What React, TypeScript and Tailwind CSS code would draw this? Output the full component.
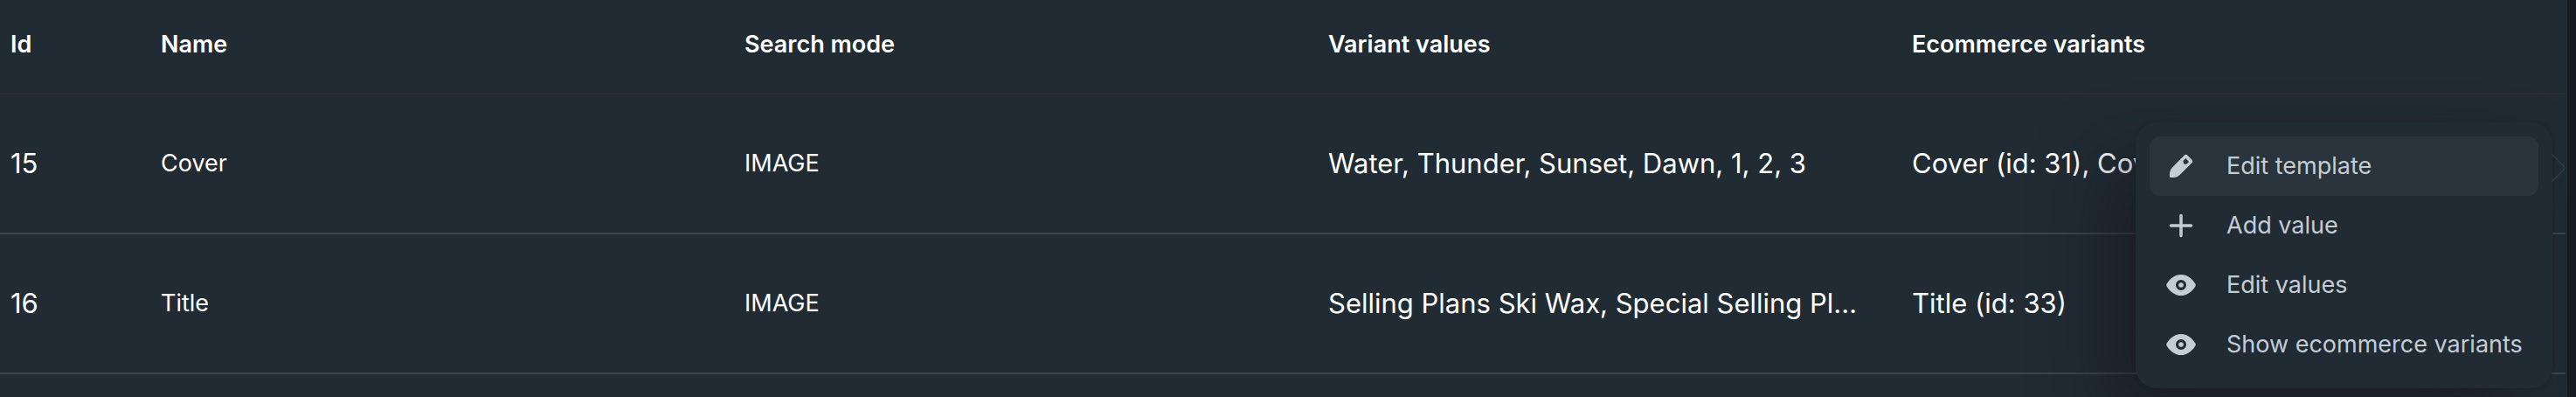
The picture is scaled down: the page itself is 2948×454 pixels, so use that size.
import React, { useState } from 'react';

interface TemplateRow {
  id: number;
  name: string;
  searchMode: string;
  values: string;
  variants: string;
}

const rows: TemplateRow[] = [
  {
    id: 15,
    name: 'Cover',
    searchMode: 'IMAGE',
    values: 'Water, Thunder, Sunset, Dawn, 1, 2, 3',
    variants: 'Cover (id: 31), Cov'
  },
  {
    id: 16,
    name: 'Title',
    searchMode: 'IMAGE',
    values: 'Selling Plans Ski Wax, Special Selling Pl…',
    variants: 'Title (id: 33)'
  }
];

const PencilIcon = () => (
  <svg viewBox="0 0 40 40" className="size-10 shrink-0" fill="currentColor" aria-hidden="true">
    <path
      fillRule="evenodd"
      d="M23.6 7.8a2.8 2.8 0 0 1 4 0l4.600 4.600a2.800 2.800 0 0 1 0 4L18.800 29.800Q16 32.800 12.500 33H8.200Q7 33 7 31.800V27.500Q7.200 24.200 10.200 21.200ZM25.400 11 22.400 14 23 17.200 26 18 29 15Z"
    />
  </svg>
);

const PlusIcon = () => (
  <svg viewBox="0 0 40 40" className="size-10 shrink-0" fill="none" stroke="currentColor" strokeWidth="3.500" strokeLinecap="round" aria-hidden="true">
    <path d="M20 8.500V31.500M8.500 20H31.500" />
  </svg>
);

const EyeIcon = () => (
  <svg viewBox="0 0 40 40" className="size-10 shrink-0" fill="currentColor" aria-hidden="true">
    <path
      fillRule="evenodd"
      d="M3.600 18.600C7.500 12.500 13 8 20 8s12.500 4.500 16.400 10.600Q37.200 20 36.400 21.400C32.500 27.500 27 32 20 32S7.500 27.500 3.600 21.400Q2.800 20 3.600 18.600ZM20 14a6 6 0 1 0 0 12 6 6 0 0 0 0-12Z"
    />
    <circle cx="20" cy="20" r="2.800" />
  </svg>
);

const menuItems = [
  { label: 'Edit template', icon: <PencilIcon /> },
  { label: 'Add value', icon: <PlusIcon /> },
  { label: 'Edit values', icon: <EyeIcon /> },
  { label: 'Show ecommerce variants', icon: <EyeIcon /> }
];

const ActionMenu: React.FC = () => {
  const [active, setActive] = useState(0);

  return (
    <div
      role="menu"
      className="absolute top-[140px] right-[17px] w-[477px] p-4 rounded-3xl bg-[#212b34] shadow-[0_0_4px_rgba(20,24,32,0.3),-40px_40px_80px_-8px_rgba(22,22,30,0.6)]"
    >
      {menuItems.map((item, i) => (
        <button
          key={item.label}
          type="button"
          role="menuitem"
          onMouseEnter={() => setActive(i)}
          className={`flex w-full h-[68px] items-center gap-8 px-4 rounded-xl text-left text-[27px] whitespace-nowrap text-[#c4cdd5] ${
            i === active ? 'bg-[#2a343d]' : ''
          }`}
        >
          {item.icon}
          <span>{item.label}</span>
        </button>
      ))}
    </div>
  );
};

export default function App() {
  return (
    <div className="bg-[#161b23] pr-[10px] font-['Inter',sans-serif]">
      <div className="relative h-[454px] overflow-hidden bg-[#212b34] pr-0.5 text-white">
        <table className="w-full table-fixed border-separate border-spacing-0 text-left">
          <colgroup>
            <col className="w-[172px]" />
            <col />
            <col />
            <col />
            <col />
            <col className="w-[92px]" />
          </colgroup>
          <thead>
            <tr className="h-[108px] text-[27px] *:border-b-2 *:border-[#2f3037] *:px-3 *:pb-1 *:font-semibold">
              <th>Id</th>
              <th>Name</th>
              <th>Search mode</th>
              <th>Variant values</th>
              <th>Ecommerce variants</th>
              <th aria-label="Actions" />
            </tr>
          </thead>
          <tbody>
            {rows.map(row => (
              <tr key={row.id} className="h-40 *:border-b-2 *:border-[#3c4650] *:px-3">
                <td className="text-[31px]">{row.id}</td>
                <td className="text-[27px]">{row.name}</td>
                <td className="text-[27px]">{row.searchMode}</td>
                <td className="truncate text-[31px]">{row.values}</td>
                <td className="truncate text-[31px]">{row.variants}</td>
                <td />
              </tr>
            ))}
          </tbody>
        </table>

        <ActionMenu />
        {/* pointer of the menu towards the row's action button */}
        <svg viewBox="0 0 16 32" className="absolute top-44 right-0.5 h-8 w-4" fill="none" stroke="#303a43" strokeWidth="1.500" aria-hidden="true">
          <path d="M0 0 13.500 13.500Q16 16 13.500 18.500L0 32" />
        </svg>
      </div>
    </div>
  );
}
